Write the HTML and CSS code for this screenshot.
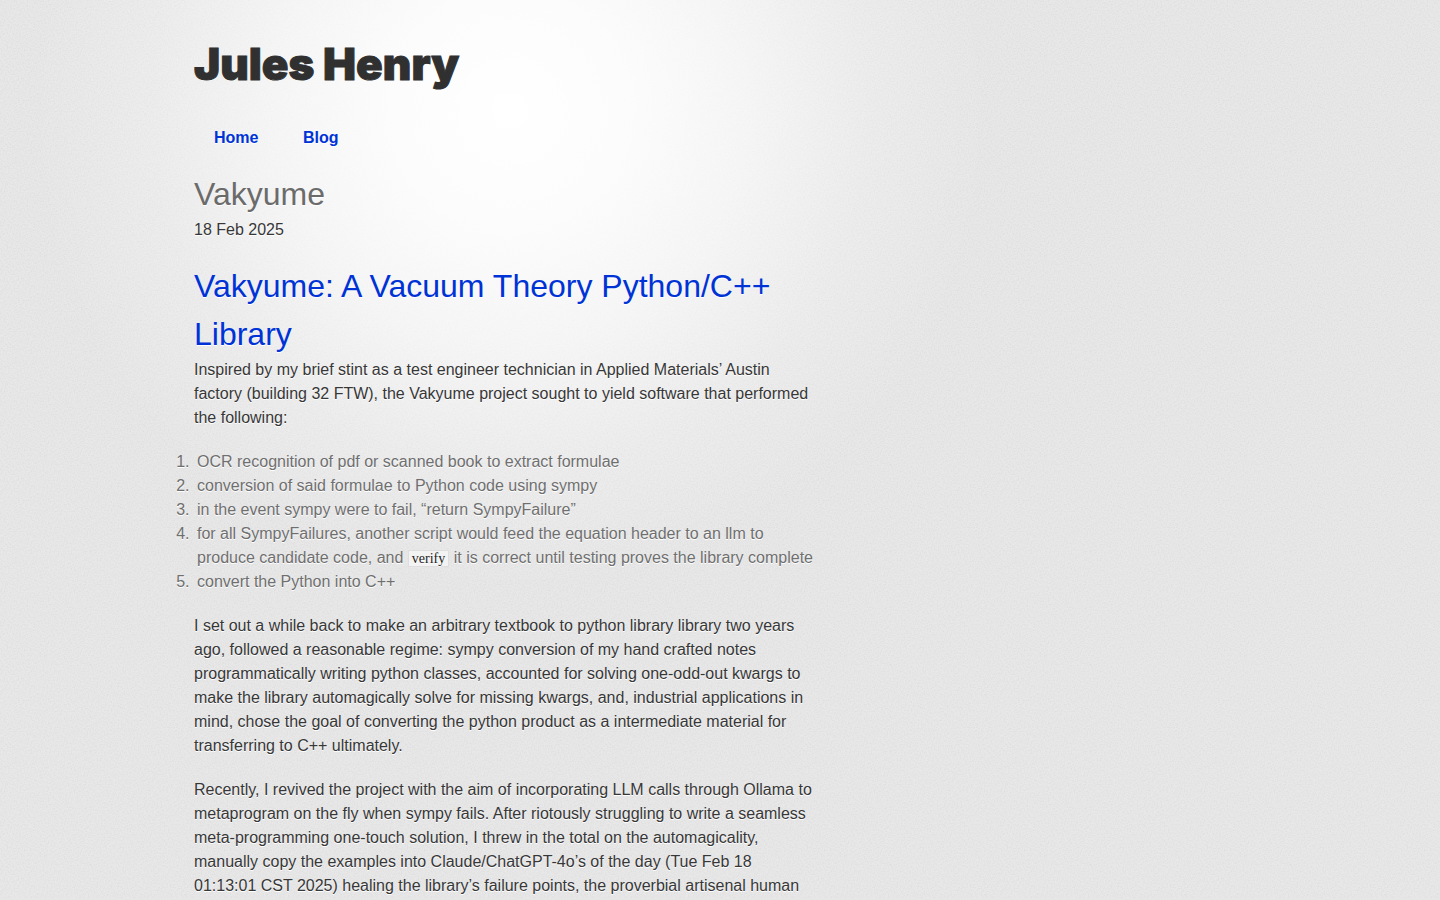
FILE: index.html
```html
<!DOCTYPE html>
<html lang="en">
<head>
<meta charset="utf-8">
<meta name="viewport" content="width=device-width, initial-scale=1">
<title>Vakyume – Jules Henry</title>
<link rel="stylesheet" href="styles.css">
</head>
<body>
<div class="page">
  <header class="masthead">
    <h1 class="site-title">Jules Henry</h1>
    <nav class="nav">
      <a class="nav-link" href="#home">Home</a>
      <a class="nav-link" href="#blog">Blog</a>
    </nav>
  </header>
  <main class="post">
    <h2 class="post-title">Vakyume</h2>
    <p class="paragraph">18 Feb 2025</p>
    <h2 class="post-heading"><a href="#vakyume">Vakyume: A Vacuum Theory Python/C++ Library</a></h2>
    <p class="paragraph">Inspired by my brief stint as a test engineer technician in Applied Materials’ Austin factory (building 32 FTW), the Vakyume project sought to yield software that performed the following:</p>
    <ol class="steps">
      <li>OCR recognition of pdf or scanned book to extract formulae</li>
      <li>conversion of said formulae to Python code using sympy</li>
      <li>in the event sympy were to fail, “return SympyFailure”</li>
      <li>for all SympyFailures, another script would feed the equation header to an llm to produce candidate code, and <code class="code">verify</code> it is correct until testing proves the library complete</li>
      <li>convert the Python into C++</li>
    </ol>
    <p class="paragraph">I set out a while back to make an arbitrary textbook to python library library two years ago, followed a reasonable regime: sympy conversion of my hand crafted notes programmatically writing python classes, accounted for solving one-odd-out kwargs to make the library automagically solve for missing kwargs, and, industrial applications in mind, chose the goal of converting the python product as a intermediate material for transferring to C++ ultimately.</p>
    <p class="paragraph">Recently, I revived the project with the aim of incorporating LLM calls through Ollama to metaprogram on the fly when sympy fails. After riotously struggling to write a seamless meta-programming one-touch solution, I threw in the total on the automagicality, manually copy the examples into Claude/ChatGPT-4o’s of the day (Tue Feb 18 01:13:01 CST 2025) healing the library’s failure points, the proverbial artisenal human</p>
  </main>
</div>
</body>
</html>
```

FILE: styles.css
```css
* {
  box-sizing: border-box;
}

html {
  background: #e6e6e6;
}

body {
  margin: 0;
  color: #373737;
  font: 16px/24px "Liberation Sans", Arial, Helvetica, sans-serif;
  text-shadow: 0 1px 0 #fff;
  background-color: #e8e8e8;
  background-image:
    radial-gradient(ellipse 480px 480px at 510px 110px, #fff 0%, rgba(255, 255, 255, .88) 25%, rgba(255, 255, 255, .6) 50%, rgba(255, 255, 255, .22) 75%, rgba(255, 255, 255, 0) 100%),
    url("data:image/svg+xml,%3Csvg xmlns='http://www.w3.org/2000/svg' width='200' height='200'%3E%3Cfilter id='n'%3E%3CfeTurbulence type='fractalNoise' baseFrequency='.7' numOctaves='2' stitchTiles='stitch'/%3E%3CfeColorMatrix values='0 0 0 0 .4 0 0 0 0 .4 0 0 0 0 .4 .32 0 0 0 -.12'/%3E%3C/filter%3E%3Crect width='200' height='200' filter='url(%23n)'/%3E%3C/svg%3E");
  background-repeat: no-repeat, repeat;
}

.page {
  max-width: 814px;
  margin-left: 194px;
  padding-top: 28px;
}

.masthead,
.post {
  max-width: 620px;
}

.site-title {
  margin: 0 0 26px;
  color: #303030;
  font: 900 44px/72px Inter, "Liberation Sans", sans-serif;
  -webkit-text-stroke: 1px #303030;
}

.nav {
  margin-bottom: 20px;
}

.nav-link {
  padding: 0 20px;
  font-weight: bold;
}

a {
  color: #0033d6;
  text-decoration: none;
}

.post-title,
.post-heading {
  margin: 0;
  font-size: 32px;
  font-weight: normal;
  line-height: 48px;
}

.post-title {
  color: #6b6b6b;
}

.paragraph {
  margin: 0 0 20px;
}

.paragraph:last-child {
  margin: 0;
}

.steps {
  margin: 0 0 20px;
  padding: 0;
  color: #6f6f6f;
}

.steps li {
  padding-left: 3px;
}

.code {
  padding: 0 3px;
  border: 1px solid #dedede;
  background: #f3f3f3;
  color: #222;
  font: 14px/20px "Liberation Serif", "Times New Roman", serif;
}
```
